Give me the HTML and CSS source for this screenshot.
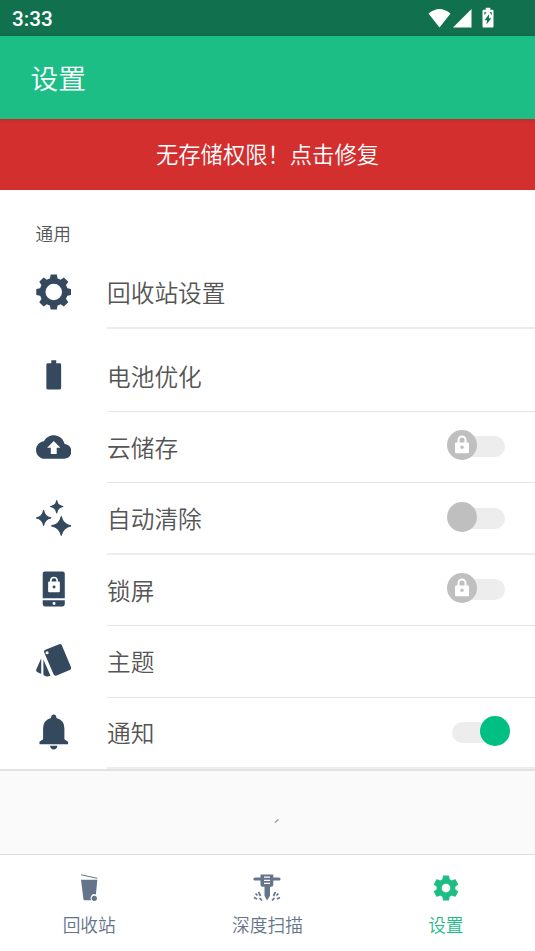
FILE: index.html
```html
<!DOCTYPE html>
<html lang="zh-CN">
<head>
<meta charset="utf-8">
<title>设置</title>
<link rel="stylesheet" href="styles.css">
</head>
<body>
<div class="screen">
  <div class="status">
    <span class="clock">3:33</span>
    <svg class="status-icons" width="72" height="24" viewBox="0 0 72 24">
      <path fill="#fff" d="M.5 6.500Q11.500-2.500 22.500 6.500L11.500 20.500ZM25 20.500L43.500 2V20.500ZM55.500 2.700h2.200V.8h4.600v1.900h2.200q1 0 1 1v15.800q0 1-1 1h-9q-1 0-1-1V3.700q0-1 1-1z"/>
      <path fill="#11714e" d="M61.200 7L56.600 13.300h2.500L58.500 17.500 63.300 11.300h-2.500zM56 5.500l2.600-.6-1.800 3zM64 5.500l-2.600-.6 2.200 3z"/>
    </svg>
  </div>
  <header class="appbar">设置</header>
  <div class="banner">无存储权限！点击修复</div>
  <main class="list">
    <h2 class="section">通用</h2>
    <div class="row first">
      <svg class="icon" viewBox="0 0 36 36">
        <defs><path id="tooth" d="M13.700 6.500L14.900.3h6.200L22.300 6.500z"/></defs>
        <circle cx="18" cy="18" r="11.300" fill="none" stroke="currentColor" stroke-width="5.800"/>
        <use href="#tooth"/><use href="#tooth" transform="rotate(45 18 18)"/><use href="#tooth" transform="rotate(90 18 18)"/><use href="#tooth" transform="rotate(135 18 18)"/><use href="#tooth" transform="rotate(180 18 18)"/><use href="#tooth" transform="rotate(225 18 18)"/><use href="#tooth" transform="rotate(270 18 18)"/><use href="#tooth" transform="rotate(315 18 18)"/>
      </svg>
      <div class="body thick"><span>回收站设置</span></div>
    </div>
    <div class="row tall">
      <svg class="icon" viewBox="0 0 36 36"><path d="M12 6h3.500V3h5v3H24q1.500 0 1.500 1.500v23.700q0 1.500-1.500 1.500H12q-1.500 0-1.500-1.500V7.500Q10.500 6 12 6z"/></svg>
      <div class="body"><span>电池优化</span></div>
    </div>
    <div class="row">
      <svg class="icon" viewBox="0 0 24 24"><path d="M19.350 10.040C18.670 6.590 15.640 4 12 4 9.110 4 6.600 5.640 5.350 8.040 2.340 8.360 0 10.910 0 14c0 3.310 2.690 6 6 6h13c2.760 0 5-2.240 5-5 0-2.640-2.050-4.780-4.650-4.960zM14 12.500v4.300h-4v-4.300H7.500L12 8l4.500 4.500z" fill-rule="evenodd"/></svg>
      <div class="body"><span>云储存</span>
        <div class="switch"><i class="knob"><svg viewBox="0 0 16 20"><path fill="#fff" fill-rule="evenodd" d="M2 7.500h1.500V5a4.500 4.500 0 0 1 9 0v2.500H14q1 0 1 1V17q0 1.200-1 1.200H2q-1 0-1-1.200V8.500q0-1 1-1zM5.500 7.500h5V5a2.500 2.500 0 0 0-5 0zM8 10.500a1.800 1.800 0 1 0 0 3.600 1.800 1.800 0 0 0 0-3.600z"/></svg></i></div>
      </div>
    </div>
    <div class="row">
      <svg class="icon" viewBox="0 0 36 36"><path d="M21 .3Q21.800 5.500 27.300 6.300 21.800 7.200 21 12.800 20.200 7.200 14.700 6.300 20.200 5.500 21 .3zM7.700 10.300Q9 17 15 17.900 9 19 7.700 25.500 6.500 19 .5 17.900 6.500 17 7.700 10.300zM25.600 16.500Q27.500 24.500 35.600 26 27.500 27.500 25.600 35.600 23.800 27.500 15.800 26 23.800 24.500 25.600 16.500z" stroke="currentColor" stroke-width="1.100" stroke-linejoin="round"/></svg>
      <div class="body thick"><span>自动清除</span><div class="switch low"><i class="knob"></i></div></div>
    </div>
    <div class="row">
      <svg class="icon" viewBox="0 0 36 36"><path fill-rule="evenodd" d="M9 .2h18q2.200 0 2.200 2.200v25H6.800v-25Q6.800.2 9 .2zM12.300 11.500v8.700q0 1 1 1h9.900q1 0 1-1v-8.700q0-1-1-1h-1V9.600a4 4 0 0 0-8 0v.9h-.9q-1 0-1 1zM15.900 10.500v-.9a2.400 2.400 0 0 1 4.800 0v.9zM18.300 14.500a1.500 1.500 0 1 1 0 3 1.500 1.500 0 0 1 0-3zM6.800 29.500h22.400v3.800q0 2.500-2.200 2.500H9q-2.200 0-2.200-2.500zM18.300 31.300a1.500 1.500 0 1 0 0 3 1.500 1.500 0 0 0 0-3z"/></svg>
      <div class="body"><span>锁屏</span>
        <div class="switch"><i class="knob"><svg viewBox="0 0 16 20"><path fill="#fff" fill-rule="evenodd" d="M2 7.500h1.500V5a4.500 4.500 0 0 1 9 0v2.500H14q1 0 1 1V17q0 1.200-1 1.200H2q-1 0-1-1.200V8.500q0-1 1-1zM5.500 7.500h5V5a2.500 2.500 0 0 0-5 0zM8 10.500a1.800 1.800 0 1 0 0 3.600 1.800 1.800 0 0 0 0-3.600z"/></svg></i></div>
      </div>
    </div>
    <div class="row">
      <svg class="icon" viewBox="0 0 36 36"><path fill-rule="evenodd" d="M9.600 6.700L23.500 1Q25.400.2 26.300 2.200L35.500 24.300Q36.200 26.300 34.300 27.200L20.800 32.800Q18.700 33.500 17.800 31.500L8.300 9.500Q7.500 7.500 9.600 6.700zM11.200 8a1.600 1.600 0 1 0 0 3.200 1.600 1.600 0 0 0 0-3.200zM5.300 15.300V31Q4 31 1.500 29.500-.7 28.300.5 26zM7.500 16.500L14.700 33Q9.500 34.700 7.500 32z"/></svg>
      <div class="body"><span>主题</span></div>
    </div>
    <div class="row last">
      <svg class="icon" viewBox="0 0 36 36"><path d="M18 .3q2.500 0 2.800 3.400 8 2 8 11V25.300l3.700 2.700v2.300h-29V28l3.700-2.700V14.700q0-9 8-11Q15.500.3 18 .3zM14.300 32h7.400q-.5 3.800-3.700 3.800t-3.700-3.800z"/></svg>
      <div class="body thick"><span>通知</span><div class="switch on low"><i class="knob"></i></div></div>
    </div>
  </main>
  <div class="ad"><svg width="6" height="6" viewBox="0 0 6 6"><path d="M1 4.500L4.500 1.200" stroke="#999" stroke-width="1.300"/></svg></div>
  <nav class="tabs">
    <div class="tab">
      <svg viewBox="0 0 30 30"><path fill="currentColor" d="M7 6.800h16.300L21.900 21.500A3.800 3.800 0 0 0 17.300 27.200H10.500Q9.600 27.200 9.400 26z"/><circle cx="20.300" cy="25.300" r="2.600" fill="currentColor"/><path d="M7 1.800L23.300 5.300" stroke="currentColor"/></svg>
      <span>回收站</span>
    </div>
    <div class="tab">
      <svg viewBox="0 0 30 30" fill="none" stroke="currentColor"><path fill="currentColor" stroke="none" d="M8.500 1.500h12.800v10.200q0 2-2 2H18v9L15 27.500 12.500 22.700v-9h-2q-2 0-2-2z"/><path d="M3 6h24" stroke-width="3.200" stroke-linecap="round"/><path d="M12 4.200h6M12 7.300h6M12 10.400h6" stroke="#fff" stroke-width="1.200"/><path d="M6.500 19l2 4M23.500 19l-2 4M3.500 20.500l2 2M26.500 20.500L24.500 22.500M2 24.500l3 1.500M28 24.500l-3 1.500M7.500 25l2.500 2.500M22.500 25L20 27.500" stroke-width="1.700"/></svg>
      <span>深度扫描</span>
    </div>
    <div class="tab active">
      <svg viewBox="0 0 24 24"><path fill="currentColor" d="M19.430 12.980c.040-.320.070-.640.070-.980s-.030-.660-.070-.980l2.110-1.650c.190-.150.240-.420.120-.640l-2-3.460c-.120-.220-.390-.300-.610-.220l-2.490 1c-.520-.400-1.080-.730-1.690-.980l-.380-2.650C14.460 2.180 14.250 2 14 2h-4c-.250 0-.460.180-.490.420l-.380 2.650c-.610.250-1.170.590-1.690.980l-2.490-1c-.230-.090-.490 0-.610.220l-2 3.460c-.130.220-.070.490.120.640l2.110 1.650c-.040.320-.070.650-.070.980s.030.660.070.980l-2.110 1.650c-.190.150-.240.420-.120.640l2 3.460c.120.220.390.300.610.220l2.490-1c.520.400 1.080.730 1.690.980l.380 2.650c.030.240.240.420.490.420h4c.250 0 .460-.180.490-.420l.380-2.650c.610-.250 1.170-.590 1.690-.980l2.490 1c.230.090.490 0 .610-.220l2-3.460c.120-.220.070-.490-.120-.640l-2.110-1.650zM12 15.500a3.500 3.500 0 1 1 0-7 3.500 3.500 0 0 1 0 7z"/></svg>
      <span>设置</span>
    </div>
  </nav>
</div>
</body>
</html>
```
FILE: styles.css
```css
* { box-sizing: border-box; }

body {
  margin: 0;
  background: #fff;
  color: #555;
  font-family: Roboto, "Noto Sans CJK SC", sans-serif;
  font-weight: 350;
}

.screen {
  display: flex;
  flex-direction: column;
  width: 535px;
  height: 951px;
  overflow: hidden;
}

.status {
  display: flex;
  justify-content: space-between;
  height: 36px;
  padding: 6px 35px 0 12px;
  background: linear-gradient(#11714e 32px, #106a49);
  color: #fff;
}

.clock {
  font-size: 20.700px;
  font-weight: 500;
  line-height: 26px;
}

.status-icons {
  display: block;
  margin-top: 0.500px;
}

.appbar {
  height: 83px;
  padding: 2px 0 0 30.500px;
  background: #1cbe85;
  color: #fff;
  font-size: 27.700px;
  line-height: 83px;
}

.banner {
  height: 71px;
  padding-top: 1px;
  background: linear-gradient(#c42c2c, #d32f2f 5px);
  color: #fff;
  font-size: 22.300px;
  line-height: 71px;
  text-align: center;
}

.list { height: 579px; }

.section {
  height: 67px;
  margin: 0;
  padding: 32px 0 0 35.500px;
  font-size: 17.700px;
  font-weight: inherit;
  line-height: 26px;
}

.row {
  display: flex;
  align-items: center;
  gap: 36px;
  height: 71.400px;
  padding-left: 35.500px;
}

.row.first { height: 72px; }

.row.tall { height: 83px; }

.row.tall .icon,
.row.tall .body { padding-top: 11px; }

.row.tall .icon { height: 47px; }

.icon {
  flex: none;
  width: 35.500px;
  height: 36px;
  margin-bottom: 2px;
  color: #34495e;
  fill: currentColor;
}

.body {
  display: flex;
  flex: 1;
  align-items: center;
  justify-content: space-between;
  height: 100%;
  padding-right: 25px;
  border-bottom: 1px solid #e6e6e6;
  font-size: 23.700px;
}

.body.thick { border-bottom: 2px solid #ededed; }

.switch {
  position: relative;
  display: flex;
  align-items: center;
  width: 63px;
  height: 30px;
  margin-top: -4px;
}

.switch.low { margin-top: -2.500px; }

.switch::before {
  content: "";
  position: absolute;
  top: 6px;
  left: 5px;
  width: 53px;
  height: 21px;
  border-radius: 11px;
  background: #ededed;
}

.knob {
  position: relative;
  display: flex;
  align-items: center;
  justify-content: center;
  width: 30px;
  height: 30px;
  border-radius: 50%;
  background: #bfbfbf;
}

.knob svg {
  width: 16px;
  height: 20px;
}

.switch.on { justify-content: flex-end; }

.switch.on .knob { background: #00bf83; }

.ad {
  display: flex;
  align-items: center;
  justify-content: center;
  height: 86px;
  padding: 17px 0 0 18px;
  border-top: 2px solid #e2e2e2;
  border-bottom: 1px solid #dde0e0;
  background: #fafafa;
}

.tabs {
  display: grid;
  grid-template-columns: repeat(3, 1fr);
  height: 96px;
  color: #64748a;
  background: #fff;
}

.tab {
  display: flex;
  flex-direction: column;
  align-items: center;
  padding-top: 18px;
  font-size: 17.700px;
  line-height: 26px;
}

.tab svg {
  width: 30px;
  height: 30px;
  margin-bottom: 10px;
}

.tab.active { color: #1cbe85; }
```
